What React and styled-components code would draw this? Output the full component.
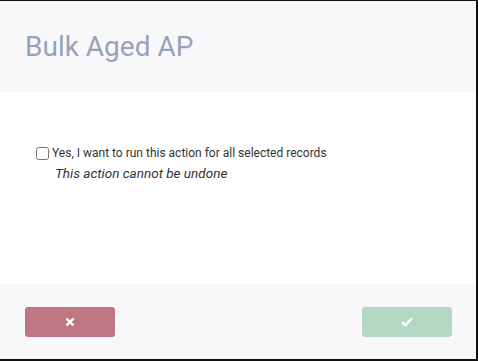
import React from 'react';
import styled, { createGlobalStyle } from 'styled-components';

const GlobalStyle = createGlobalStyle`
  html, body {
    margin: 0;
    padding: 0;
    background: #fff;
    font-family: Roboto, "Liberation Sans", sans-serif;
  }
`;

const Dialog = styled.div`
  box-sizing: border-box;
  width: 478px;
  height: 361px;
  display: flex;
  flex-direction: column;
  border-top: 1px solid #111;
  border-right: 2px solid #111;
  border-bottom: 2px solid #111;
  background: #fff;
`;

const Header = styled.div`
  height: 91px;
  display: flex;
  align-items: center;
  padding: 0 25px;
  background: #f8f8fb;
`;

const Title = styled.h2`
  margin: 0;
  font-size: 28px;
  font-weight: 400;
  color: #99a2b6;
`;

const Body = styled.div`
  flex: 1;
  padding: 54px 36px 0;
`;

const CheckRow = styled.label`
  display: flex;
  align-items: center;
  font-size: 12px;
  color: #333;
  cursor: pointer;
`;

const Box = styled.input`
  margin: 0 3px 0 0;
  width: 13px;
  height: 13px;
`;

const Warning = styled.div`
  margin: 5px 0 0 19px;
  font-size: 13.5px;
  font-style: italic;
  color: #333;
`;

const Footer = styled.div`
  height: 75px;
  display: flex;
  align-items: center;
  justify-content: space-between;
  padding: 0 24px 0 25px;
  background: #f8f8fb;
`;

const Button = styled.button`
  width: 90px;
  height: 30px;
  border: none;
  border-radius: 3px;
  display: flex;
  align-items: center;
  justify-content: center;
  background: ${(p) => p.$bg};
  cursor: pointer;
`;

const App = () => (
  <>
    <GlobalStyle />
    <Dialog>
      <Header>
        <Title>Bulk Aged AP</Title>
      </Header>
      <Body>
        <CheckRow>
          <Box type="checkbox" />
          Yes, I want to run this action for all selected records
        </CheckRow>
        <Warning>This action cannot be undone</Warning>
      </Body>
      <Footer>
        <Button $bg="#c07784">
          <svg width="10" height="10" viewBox="0 0 10 10">
            <path d="M1.5 1.5 L8.5 8.5 M8.5 1.5 L1.5 8.5" stroke="#fff" strokeWidth="2.4" />
          </svg>
        </Button>
        <Button $bg="#b5d8c5">
          <svg width="12" height="10" viewBox="0 0 12 10">
            <path d="M1.2 5.2 L4.4 8.2 L10.8 1.5" stroke="#fff" strokeWidth="2.4" fill="none" />
          </svg>
        </Button>
      </Footer>
    </Dialog>
  </>
);

export default App;
